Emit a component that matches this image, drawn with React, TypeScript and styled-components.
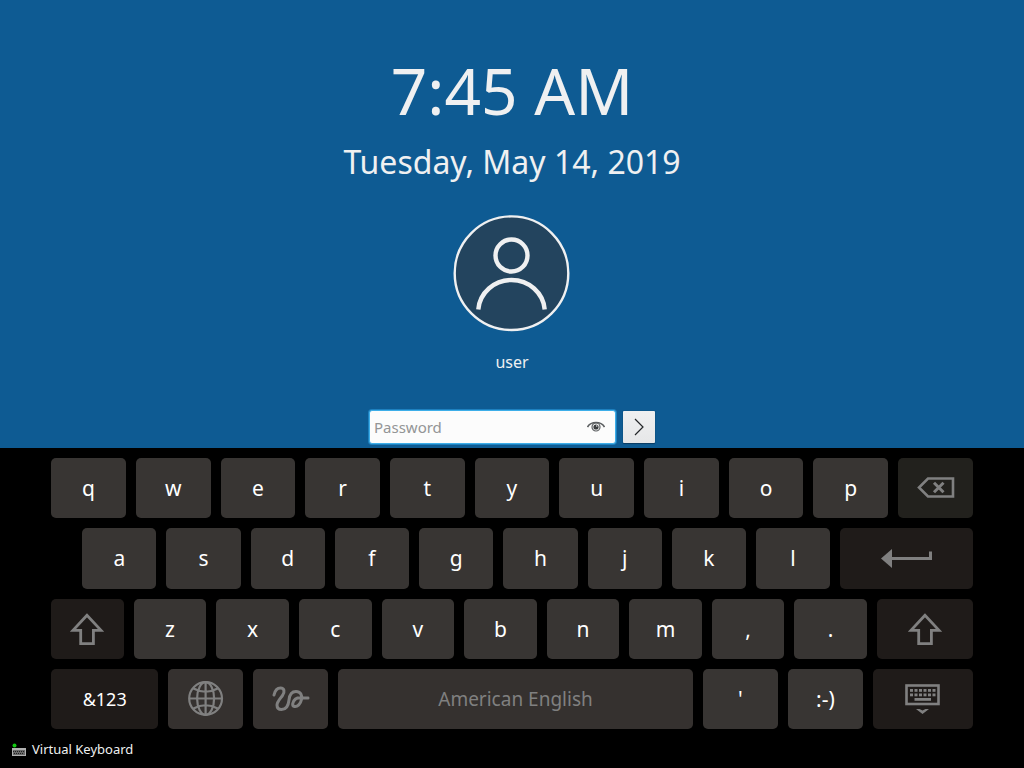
import React from 'react';
import styled, { createGlobalStyle } from 'styled-components';

const GlobalStyle = createGlobalStyle`
  * { box-sizing: border-box; }
  body { margin: 0; background: #000; font-family: "Noto Sans", sans-serif; }
  button, input { font-family: inherit; }
`;

const Page = styled.div`
  display: flex;
  flex-direction: column;
  min-height: 100vh;
`;

const LoginArea = styled.main`
  flex: 1;
  display: flex;
  flex-direction: column;
  align-items: center;
  padding: 47px 16px 4px;
  background: #0e5b93;
  color: #eff0f1;
`;

const Clock = styled.time`
  font-size: 64px;
  line-height: 88px;
`;

const DateLine = styled.time`
  margin-top: 5px;
  font-size: 32px;
  line-height: 44px;
`;

const Avatar = styled.svg`
  display: block;
  width: 118px;
  height: 118px;
  margin: 30px 0 19px;
`;

const UserName = styled.div`
  font-size: 16px;
  line-height: 22px;
`;

const LoginForm = styled.form`
  display: flex;
  align-items: center;
  gap: 7px;
  margin-top: 37px;
`;

const PasswordField = styled.div`
  display: flex;
  align-items: center;
  width: 247px;
  height: 34px;
  padding: 0 10px 0 4px;
  border: 1px solid #3daee9;
  border-radius: 3px;
  background: #fcfcfc;
  box-shadow: 0 0 0 1px #1d80bf;
`;

const PasswordInput = styled.input`
  flex: 1;
  min-width: 0;
  padding: 0;
  border: 0;
  outline: 0;
  background: transparent;
  color: #31363b;
  font-size: 15px;
  line-height: 20px;
  &::placeholder { color: #939596; opacity: 1; }
`;

const RevealButton = styled.button`
  display: flex;
  padding: 0;
  border: 0;
  background: none;
`;

const SubmitButton = styled.button`
  display: flex;
  align-items: center;
  justify-content: center;
  width: 32px;
  height: 32px;
  padding: 0;
  border: 0;
  border-radius: 1px;
  background: linear-gradient(#eff0f1, #e6e7e8);
  box-shadow: 0 1px 1px #0a3c62, 0 0 1px #0a3c62;
`;

const Keyboard = styled.section`
  display: grid;
  grid-template-rows: repeat(4, 1fr);
  gap: 10px;
  height: 281px;
  padding: 10px 5% 0;
`;

const KeyRow = styled.div<{ $indent?: number }>`
  display: flex;
  gap: 10px;
  padding-left: ${(p) => p.$indent ?? 0}px;
`;

type Tone = 'letter' | 'space' | 'control' | 'erase';

const toneColor: Record<Tone, string> = {
  letter: '#383533',
  space: '#35312f',
  control: '#1f1b19',
  erase: '#22211d',
};

const Key = styled.button<{ $tone?: Tone; $grow?: number; $size?: number; $muted?: boolean }>`
  display: flex;
  align-items: center;
  justify-content: center;
  flex: ${(p) => p.$grow ?? 75} 1 0;
  min-width: 0;
  padding: 0;
  border: 0;
  border-radius: 5px;
  background: ${(p) => toneColor[p.$tone ?? 'letter']};
  color: ${(p) => (p.$muted ? '#808080' : '#fff')};
  font-size: ${(p) => p.$size ?? 21}px;
`;

const Footer = styled.footer`
  display: flex;
  padding: 11px 12px 9px;
`;

const LayoutButton = styled.button`
  display: flex;
  align-items: center;
  gap: 6px;
  padding: 0;
  border: 0;
  background: none;
  color: #eff0f1;
  font-size: 13px;
  line-height: 19px;
`;

const ShiftIcon = () => (
  <svg width="36" height="34" viewBox="0 0 36 34" fill="none" stroke="#808080" strokeWidth="2.8">
    <path d="M18 3.3 L4 18.4 H11.7 V31.6 H24.4 V18.4 H32 Z" />
  </svg>
);

const BackspaceIcon = () => (
  <svg width="40" height="22" viewBox="0 0 40 22" fill="none" stroke="#808080">
    <path d="M13 1.5 H38 V19.5 H13 L4 10.5 Z" strokeWidth="2.6" />
    <path d="M19 5.7 L28.5 15.2 M28.5 5.7 L19 15.2" strokeWidth="3" />
  </svg>
);

const EnterIcon = () => (
  <svg width="52" height="20" viewBox="0 0 52 20">
    <path d="M1 10.5 L12 1 V20 Z" fill="#808080" />
    <path d="M11 10.5 H50.5 V3.5" fill="none" stroke="#808080" strokeWidth="3" />
  </svg>
);

const GlobeIcon = () => (
  <svg width="36" height="36" viewBox="0 0 36 36" fill="none" stroke="#808080" strokeWidth="2.2">
    <circle cx="17.6" cy="17.5" r="16.4" />
    <ellipse cx="17.6" cy="17.5" rx="8.5" ry="16.4" />
    <path d="M17.6 1 V34 M1 17.5 H34 M5.5 7.5 Q17.6 14 29.7 7.5 M5.5 27.5 Q17.6 21 29.7 27.5" />
  </svg>
);

const HandwritingIcon = () => (
  <svg width="38" height="26" viewBox="0 0 38 26" fill="none" stroke="#808080" strokeWidth="3" strokeLinecap="round" strokeLinejoin="round">
    <path d="M2 9 C3 4.5 5.5 2 8.5 2 C12.5 2 13 6 10.5 9.5 C7.5 13.5 5 16 5 19 C5 22 7 23.5 9.5 23.5 C15 23.5 16.5 19 17 14 C17.5 9 19.5 5.5 24 5.5 C28.5 5.5 30.5 9 29.5 13.5 C28.5 18 25.5 21 22.5 20.5 C19.5 20 20.5 15.5 23.5 13 C26.5 10.8 29 12.3 36 12" />
  </svg>
);

const HideKeyboardIcon = () => (
  <svg width="36" height="32" viewBox="0 0 36 32" fill="#808080">
    <rect x="1.5" y="2.5" width="32" height="18.5" fill="none" stroke="#808080" strokeWidth="2.6" />
    {[0, 1, 2, 3, 4, 5].map((i) => (
      <React.Fragment key={i}>
        <rect x={5 + i * 4.5} y="6" width="3" height="2.8" />
        <rect x={5 + i * 4.5} y="10.5" width="3" height="2.8" />
      </React.Fragment>
    ))}
    <rect x="9.5" y="15" width="16.5" height="2.8" />
    <path d="M11 26 L14.5 26 L17.5 27.5 L20.5 26 L24 26 L17.5 31 Z" />
  </svg>
);

const EyeIcon = () => (
  <svg width="18" height="14" viewBox="0 0 18 14" fill="none" stroke="#5c5f61">
    <path d="M0.5 7 C4 1 14 1 17.5 7" strokeWidth="1.6" />
    <circle cx="9" cy="7" r="4" strokeWidth="1.2" />
    <circle cx="9" cy="7" r="2.6" fill="#3b3e40" stroke="none" />
    <circle cx="9.8" cy="6" r="0.7" fill="#fcfcfc" stroke="none" />
  </svg>
);

const SmallKeyboardIcon = () => (
  <svg width="14" height="14" viewBox="0 0 14 14">
    <rect x="0" y="5" width="14" height="8" fill="#b0b0b0" />
    <rect x="1" y="7" width="12" height="5" fill="#6a6a6a" />
    <path d="M1 8.5 H13 M2 10.5 H12" stroke="#222" strokeDasharray="1 1" />
    <circle cx="2.5" cy="2.5" r="2" fill="#12c812" />
  </svg>
);

const letters = (chars: string) =>
  chars.split('').map((c) => <Key type="button" key={c}>{c}</Key>);

export default function App() {
  return (
    <Page>
      <GlobalStyle />
      <LoginArea>
        <Clock dateTime="07:45">7:45 AM</Clock>
        <DateLine dateTime="2019-05-14">Tuesday, May 14, 2019</DateLine>
        <Avatar viewBox="0 0 118 118" fill="none" stroke="#eff0f1" aria-hidden="true">
          <circle cx="58.5" cy="59.2" r="56.8" fill="#23445e" strokeWidth="2.4" />
          <circle cx="58.5" cy="41.5" r="16" strokeWidth="4.4" />
          <path d="M25.3 95.5 A33.3 32 0 0 1 91.7 95.5" strokeWidth="4.4" />
        </Avatar>
        <UserName>user</UserName>
        <LoginForm onSubmit={(e) => e.preventDefault()}>
          <PasswordField>
            <PasswordInput type="password" placeholder="Password" aria-label="Password" />
            <RevealButton type="button" aria-label="Show password"><EyeIcon /></RevealButton>
          </PasswordField>
          <SubmitButton type="submit" aria-label="Log in">
            <svg width="10" height="18" viewBox="0 0 10 18" fill="none" stroke="#232629" strokeWidth="1.2">
              <path d="M1 1 L9 9 L1 17" />
            </svg>
          </SubmitButton>
        </LoginForm>
      </LoginArea>
      <Keyboard aria-label="Virtual keyboard">
        <KeyRow>
          {letters('qwertyuiop')}
          <Key type="button" $tone="erase" aria-label="Backspace"><BackspaceIcon /></Key>
        </KeyRow>
        <KeyRow $indent={31}>
          {letters('asdfghjkl')}
          <Key type="button" $tone="control" $grow={134} aria-label="Enter"><EnterIcon /></Key>
        </KeyRow>
        <KeyRow>
          <Key type="button" $tone="control" aria-label="Shift"><ShiftIcon /></Key>
          {letters('zxcvbnm,.')}
          <Key type="button" $tone="control" $grow={99} aria-label="Right shift"><ShiftIcon /></Key>
        </KeyRow>
        <KeyRow>
          <Key type="button" $tone="control" $grow={107} $size={18}>&amp;123</Key>
          <Key type="button" $tone="space" aria-label="Change language"><GlobeIcon /></Key>
          <Key type="button" $tone="space" aria-label="Handwriting"><HandwritingIcon /></Key>
          <Key type="button" $tone="space" $grow={355} $size={19} $muted>American English</Key>
          <Key type="button">'</Key>
          <Key type="button">:-)</Key>
          <Key type="button" $tone="control" $grow={100} aria-label="Hide keyboard"><HideKeyboardIcon /></Key>
        </KeyRow>
      </Keyboard>
      <Footer>
        <LayoutButton type="button"><SmallKeyboardIcon />Virtual Keyboard</LayoutButton>
      </Footer>
    </Page>
  );
}
